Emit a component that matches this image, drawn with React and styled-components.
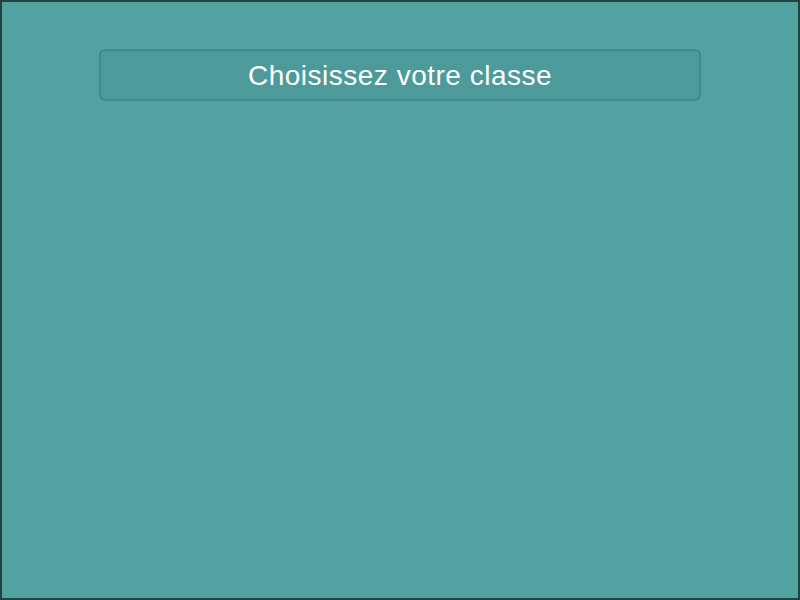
import React from "react";
import styled, { createGlobalStyle } from "styled-components";

const GlobalStyle = createGlobalStyle`
  html, body {
    margin: 0;
    padding: 0;
  }
  body {
    font-family: "Liberation Sans", Arial, sans-serif;
  }
`;

const App = () => {
  return (
    <>
      <GlobalStyle />
      <Screen>
        <Title>Choisissez votre classe</Title>
      </Screen>
    </>
  );
};

const Screen = styled.div`
  width: 800px;
  height: 600px;
  box-sizing: border-box;
  border: 2px solid #1f4444;
  background: #52a2a2;
  padding-top: 47px;
  display: flex;
  flex-direction: column;
  align-items: center;
`;

const Title = styled.div`
  width: 602px;
  height: 52px;
  box-sizing: border-box;
  padding-top: 2px;
  border: 2px solid #3f8b8b;
  border-radius: 6px;
  background: #4c9a9a;
  color: #ffffff;
  font-size: 28px;
  letter-spacing: 0.5px;
  display: flex;
  align-items: center;
  justify-content: center;
`;

export default App;
